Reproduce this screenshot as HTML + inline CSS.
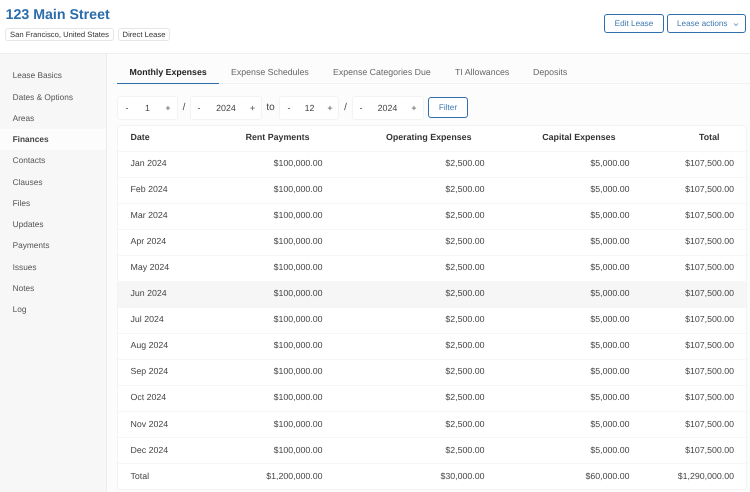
<!DOCTYPE html>
<html>
<head>
<meta charset="utf-8">
<style>
html,body{margin:0;padding:0}
body{width:750px;height:492px;overflow:hidden;position:relative;background:#fcfcfc;font-family:"Liberation Sans",sans-serif;color:#333;text-rendering:geometricPrecision}
div{box-sizing:border-box}
.a{position:absolute;white-space:nowrap}
#hdr{position:absolute;left:0;top:0;width:750px;height:53.5px;background:#fff;border-bottom:1px solid #eee}
#side{position:absolute;left:0;top:54px;width:106.5px;height:438px;background:#f7f7f7;border-right:1px solid #ececec}
.tag{position:absolute;top:28px;height:13px;border:1px solid #e6e6e6;border-radius:3px;background:#fff;font-size:7.65px;line-height:11px;color:#333;text-align:center;white-space:nowrap}
.btn{position:absolute;border:1.2px solid #2f6fad;border-radius:3px;background:#fff;color:#3d78b2;font-size:8.2px;text-align:center;white-space:nowrap}
.nav{position:absolute;left:12.6px;font-size:8.3px;line-height:12px;color:#555;white-space:nowrap}
#act{position:absolute;left:0;top:129px;width:106px;height:21px;background:#fcfcfc}
.tab{position:absolute;top:71.5px;transform:translateY(-6px);font-size:8.8px;line-height:12px;color:#666;white-space:nowrap}
.stp{position:absolute;top:96px;height:24px;border:1px solid #f3f3f3;border-radius:3px;background:#fff}
.s{position:absolute;top:107.5px;transform:translate(-50%,-6px);font-size:8.9px;line-height:12px;color:#444;white-space:nowrap}
#tbl{position:absolute;left:117px;top:124.5px;width:629.5px;height:365px;background:#fff;border:1px solid #f3f3f3;border-radius:3px;overflow:hidden}
.row{position:absolute;left:0;width:627.5px;height:26px;border-top:1px solid #f6f6f6;font-size:8.8px;color:#444}
.c{position:absolute;top:-0.5px;line-height:25px;white-space:nowrap}
.d{left:12.5px}
.c1{right:423px}.c2{right:261px}.c3{right:116px}.c4{right:11.5px}
.h{font-weight:bold;color:#333;font-size:8.85px;line-height:23px;top:0}
.h.c1{right:436px}.h.c2{right:274px}.h.c3{right:130px}.h.c4{right:26px}
</style>
</head>
<body>
<div id="hdr"></div>
<div class="a" style="left:5.6px;top:5.5px;font-size:14.2px;line-height:18px;font-weight:bold;color:#2b6cab">123 Main Street</div>
<div class="tag" style="left:5px;width:109px">San Francisco, United States</div>
<div class="tag" style="left:118px;width:52px">Direct Lease</div>
<div class="btn" style="left:604px;top:14px;width:60px;height:19px;line-height:18px">Edit Lease</div>
<div class="btn" style="left:667px;top:14px;width:79px;height:19px;line-height:18px;text-align:left;padding-left:9px">Lease actions</div>
<svg class="a" style="left:733px;top:22px" width="6" height="5" viewBox="0 0 6 5"><path d="M1 1.5 L3 3.5 L5 1.5" fill="none" stroke="#5b8fc0" stroke-width=".8"/></svg>

<div id="side"></div>
<div id="act"></div>
<div class="nav" style="top:69px">Lease Basics</div>
<div class="nav" style="top:91px">Dates &amp; Options</div>
<div class="nav" style="top:112px">Areas</div>
<div class="nav" style="top:133px;font-weight:bold;color:#444">Finances</div>
<div class="nav" style="top:154px">Contacts</div>
<div class="nav" style="top:176px">Clauses</div>
<div class="nav" style="top:197px">Files</div>
<div class="nav" style="top:218px">Updates</div>
<div class="nav" style="top:239px">Payments</div>
<div class="nav" style="top:261px">Issues</div>
<div class="nav" style="top:282px">Notes</div>
<div class="nav" style="top:303px">Log</div>

<div class="a" style="left:117px;top:83px;width:633px;height:1px;background:#f1f1f1"></div>
<div class="a" style="left:117px;top:82.6px;width:102px;height:1.4px;background:#2b6cab"></div>
<div class="tab" style="left:129.5px;font-weight:bold;color:#222">Monthly Expenses</div>
<div class="tab" style="left:231px">Expense Schedules</div>
<div class="tab" style="left:333px">Expense Categories Due</div>
<div class="tab" style="left:455px">TI Allowances</div>
<div class="tab" style="left:533px">Deposits</div>

<div class="stp" style="left:117px;width:60.5px"></div>
<div class="s" style="left:127px">-</div><div class="s" style="left:147.5px">1</div><div class="s" style="left:168px">+</div>
<div class="s" style="left:184px;font-size:10px;color:#444">/</div>
<div class="stp" style="left:190px;width:72px"></div>
<div class="s" style="left:199px">-</div><div class="s" style="left:226px">2024</div><div class="s" style="left:252.5px">+</div>
<div class="s" style="left:270.5px;font-size:10px;color:#444">to</div>
<div class="stp" style="left:279px;width:60px"></div>
<div class="s" style="left:289px">-</div><div class="s" style="left:309.5px">12</div><div class="s" style="left:330px">+</div>
<div class="s" style="left:345.5px;font-size:10px;color:#444">/</div>
<div class="stp" style="left:351.5px;width:72px"></div>
<div class="s" style="left:361px">-</div><div class="s" style="left:387.5px">2024</div><div class="s" style="left:414px">+</div>
<div class="btn" style="left:428px;top:97px;width:40px;height:21px;line-height:20px">Filter</div>

<div id="tbl">
<div class="row" style="top:0;border-top:0"><div class="c d h">Date</div><div class="c c1 h">Rent Payments</div><div class="c c2 h">Operating Expenses</div><div class="c c3 h">Capital Expenses</div><div class="c c4 h">Total</div></div>
<div class="row" style="top:25px"><div class="c d">Jan 2024</div><div class="c c1">$100,000.00</div><div class="c c2">$2,500.00</div><div class="c c3">$5,000.00</div><div class="c c4">$107,500.00</div></div>
<div class="row" style="top:51px"><div class="c d">Feb 2024</div><div class="c c1">$100,000.00</div><div class="c c2">$2,500.00</div><div class="c c3">$5,000.00</div><div class="c c4">$107,500.00</div></div>
<div class="row" style="top:77px"><div class="c d">Mar 2024</div><div class="c c1">$100,000.00</div><div class="c c2">$2,500.00</div><div class="c c3">$5,000.00</div><div class="c c4">$107,500.00</div></div>
<div class="row" style="top:103px"><div class="c d">Apr 2024</div><div class="c c1">$100,000.00</div><div class="c c2">$2,500.00</div><div class="c c3">$5,000.00</div><div class="c c4">$107,500.00</div></div>
<div class="row" style="top:129.2px"><div class="c d">May 2024</div><div class="c c1">$100,000.00</div><div class="c c2">$2,500.00</div><div class="c c3">$5,000.00</div><div class="c c4">$107,500.00</div></div>
<div class="row" style="top:155.2px;background:#f6f6f6"><div class="c d">Jun 2024</div><div class="c c1">$100,000.00</div><div class="c c2">$2,500.00</div><div class="c c3">$5,000.00</div><div class="c c4">$107,500.00</div></div>
<div class="row" style="top:181.3px"><div class="c d">Jul 2024</div><div class="c c1">$100,000.00</div><div class="c c2">$2,500.00</div><div class="c c3">$5,000.00</div><div class="c c4">$107,500.00</div></div>
<div class="row" style="top:207.3px"><div class="c d">Aug 2024</div><div class="c c1">$100,000.00</div><div class="c c2">$2,500.00</div><div class="c c3">$5,000.00</div><div class="c c4">$107,500.00</div></div>
<div class="row" style="top:233.4px"><div class="c d">Sep 2024</div><div class="c c1">$100,000.00</div><div class="c c2">$2,500.00</div><div class="c c3">$5,000.00</div><div class="c c4">$107,500.00</div></div>
<div class="row" style="top:259.4px"><div class="c d">Oct 2024</div><div class="c c1">$100,000.00</div><div class="c c2">$2,500.00</div><div class="c c3">$5,000.00</div><div class="c c4">$107,500.00</div></div>
<div class="row" style="top:285.5px"><div class="c d">Nov 2024</div><div class="c c1">$100,000.00</div><div class="c c2">$2,500.00</div><div class="c c3">$5,000.00</div><div class="c c4">$107,500.00</div></div>
<div class="row" style="top:311.5px"><div class="c d">Dec 2024</div><div class="c c1">$100,000.00</div><div class="c c2">$2,500.00</div><div class="c c3">$5,000.00</div><div class="c c4">$107,500.00</div></div>
<div class="row" style="top:337.6px"><div class="c d">Total</div><div class="c c1">$1,200,000.00</div><div class="c c2">$30,000.00</div><div class="c c3">$60,000.00</div><div class="c c4">$1,290,000.00</div></div>
</div>
</body>
</html>
